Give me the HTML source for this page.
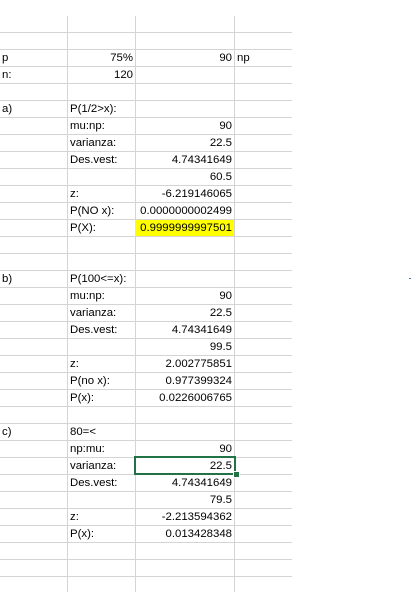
<!DOCTYPE html>
<html><head><meta charset="utf-8"><style>
html,body{margin:0;padding:0;background:#fff;width:411px;height:592px;overflow:hidden;position:relative;font-family:"Liberation Sans",Arial,sans-serif;font-size:11.4px;color:#000}
.h{position:absolute;left:0;width:292px;height:1px;background:#d4d4d4}
.v{position:absolute;top:16px;width:1px;height:576px;background:#d4d4d4}
.t{position:absolute;height:17px;line-height:18px;white-space:nowrap}
.l{text-align:left}
.r{text-align:right}
</style></head><body>
<div id="g"></div>
<div class="v" style="left:67px"></div>
<div class="v" style="left:135px"></div>
<div class="v" style="left:234px"></div>
<div style="position:absolute;left:135px;top:220px;width:99px;height:16px;background:#ffff00"></div>
<script>
var g=document.getElementById('g'),s='';
for(var k=0;k<33;k++){s+='<div class="h" style="top:'+(32+17*k)+'px"></div>';}
g.innerHTML=s;
var data=[
[1,'p','', '75%','90','np'],
[2,'n:','','120','',''],
[4,'a)','P(1/2>x):','','',''],
[5,'','mu:np:','','90',''],
[6,'','varianza:','','22.5',''],
[7,'','Des.vest:','','4.74341649',''],
[8,'','','','60.5',''],
[9,'','z:','','-6.219146065',''],
[10,'','P(NO x):','','0.0000000002499',''],
[11,'','P(X):','','0.9999999997501',''],
[14,'b)','P(100<=x):','','',''],
[15,'','mu:np:','','90',''],
[16,'','varianza:','','22.5',''],
[17,'','Des.vest:','','4.74341649',''],
[18,'','','','99.5',''],
[19,'','z:','','2.002775851',''],
[20,'','P(no x):','','0.977399324',''],
[21,'','P(x):','','0.0226006765',''],
[23,'c)','80=<','','',''],
[24,'','np:mu:','','90',''],
[25,'','varianza:','','22.5',''],
[26,'','Des.vest:','','4.74341649',''],
[27,'','','','79.5',''],
[28,'','z:','','-2.213594362',''],
[29,'','P(x):','','0.013428348','']];
var o='';
function esc(x){return x.replace(/&/g,'&amp;').replace(/</g,'&lt;').replace(/>/g,'&gt;');}
data.forEach(function(d){var y=32+17*d[0];
if(d[1])o+='<div class="t l" style="left:2px;top:'+y+'px">'+esc(d[1])+'</div>';
if(d[2])o+='<div class="t l" style="left:70px;top:'+y+'px">'+esc(d[2])+'</div>';
if(d[3])o+='<div class="t r" style="left:68px;width:65px;top:'+y+'px">'+esc(d[3])+'</div>';
if(d[4])o+='<div class="t r" style="left:136px;width:96px;top:'+y+'px">'+esc(d[4])+'</div>';
if(d[5])o+='<div class="t l" style="left:237px;top:'+y+'px">'+esc(d[5])+'</div>';
});
document.body.insertAdjacentHTML('beforeend',o);
</script>
<div style="position:absolute;left:134px;top:456px;width:98px;height:15px;border:2px solid #217346"></div>
<div style="position:absolute;left:233px;top:471px;width:5px;height:5px;background:#217346;border:1px solid #fff"></div>
<div style="position:absolute;left:409px;top:278px;width:2px;height:1px;background:#4472c4"></div>
</body></html>
